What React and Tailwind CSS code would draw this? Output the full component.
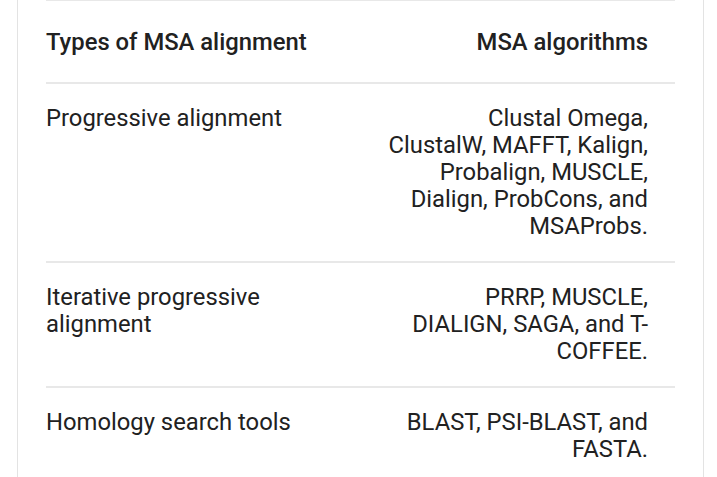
import React from 'react';

const rows = [
  {
    type: 'Progressive alignment',
    algorithms: 'Clustal Omega, ClustalW, MAFFT, Kalign, Probalign, MUSCLE, Dialign, ProbCons, and MSAProbs.',
  },
  {
    type: 'Iterative progressive alignment',
    algorithms: 'PRRP, MUSCLE, DIALIGN, SAGA, and T-COFFEE.',
  },
  {
    type: 'Homology search tools',
    algorithms: 'BLAST, PSI-BLAST, and FASTA.',
  },
];

const App = () => {
  return (
    <div className="w-[717px] h-[477px] overflow-hidden bg-white text-[#212121] font-['Roboto',sans-serif] text-[23.8px] leading-[27px]">
      <div className="ml-[17px] w-[687px] min-h-[477px] border-x border-[#e3e3e3] px-[28px]">
        {/* Header */}
        <div className="-mt-[1px] grid grid-cols-[342px_287px] border-t-2 border-[#e8e8e8] pt-[28px] pb-[26px] font-medium">
          <div className="pr-[28px]">Types of MSA alignment</div>
          <div className="pr-[27px] text-right">MSA algorithms</div>
        </div>

        {rows.map((row) => (
          <div
            key={row.type}
            className="grid grid-cols-[342px_287px] border-t-2 border-[#e8e8e8] pt-[21px] pb-[21px]"
          >
            <div className="pr-[28px]">{row.type}</div>
            <div className="pr-[27px] text-right">{row.algorithms}</div>
          </div>
        ))}
      </div>
    </div>
  );
};

export default App;
